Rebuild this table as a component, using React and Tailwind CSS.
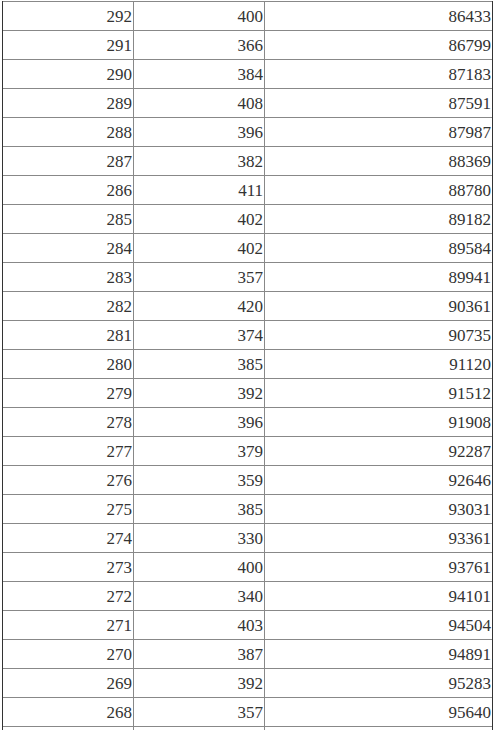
import React from 'react';

const rows = [
  [292, 400, 86433],
  [291, 366, 86799],
  [290, 384, 87183],
  [289, 408, 87591],
  [288, 396, 87987],
  [287, 382, 88369],
  [286, 411, 88780],
  [285, 402, 89182],
  [284, 402, 89584],
  [283, 357, 89941],
  [282, 420, 90361],
  [281, 374, 90735],
  [280, 385, 91120],
  [279, 392, 91512],
  [278, 396, 91908],
  [277, 379, 92287],
  [276, 359, 92646],
  [275, 385, 93031],
  [274, 330, 93361],
  [273, 400, 93761],
  [272, 340, 94101],
  [271, 403, 94504],
  [270, 387, 94891],
  [269, 392, 95283],
  [268, 357, 95640],
];

const App = () => {
  return (
    <div className="h-screen overflow-hidden bg-white pl-[2px] pt-[1px]">
      <div
        className="w-[491px] border-x border-[#333] text-[17px] leading-none text-[#333]"
        style={{ fontFamily: '"Liberation Serif", "Times New Roman", serif' }}
      >
        {rows.map(([score, count, total]) => (
          <div key={score} className="flex h-[29px] border-t border-[#888]">
            <div className="flex w-[131px] items-center justify-end border-r border-[#888] pr-[1px]">{score}</div>
            <div className="flex w-[131px] items-center justify-end border-r border-[#888] pr-[1px]">{count}</div>
            <div className="flex flex-1 items-center justify-end pr-[1px]">{total}</div>
          </div>
        ))}
        {/* next row, cut off by the window */}
        <div className="flex h-[29px] border-t border-[#888]">
          <div className="w-[131px] border-r border-[#888]" />
          <div className="w-[131px] border-r border-[#888]" />
          <div className="flex-1" />
        </div>
      </div>
    </div>
  );
};

export default App;
